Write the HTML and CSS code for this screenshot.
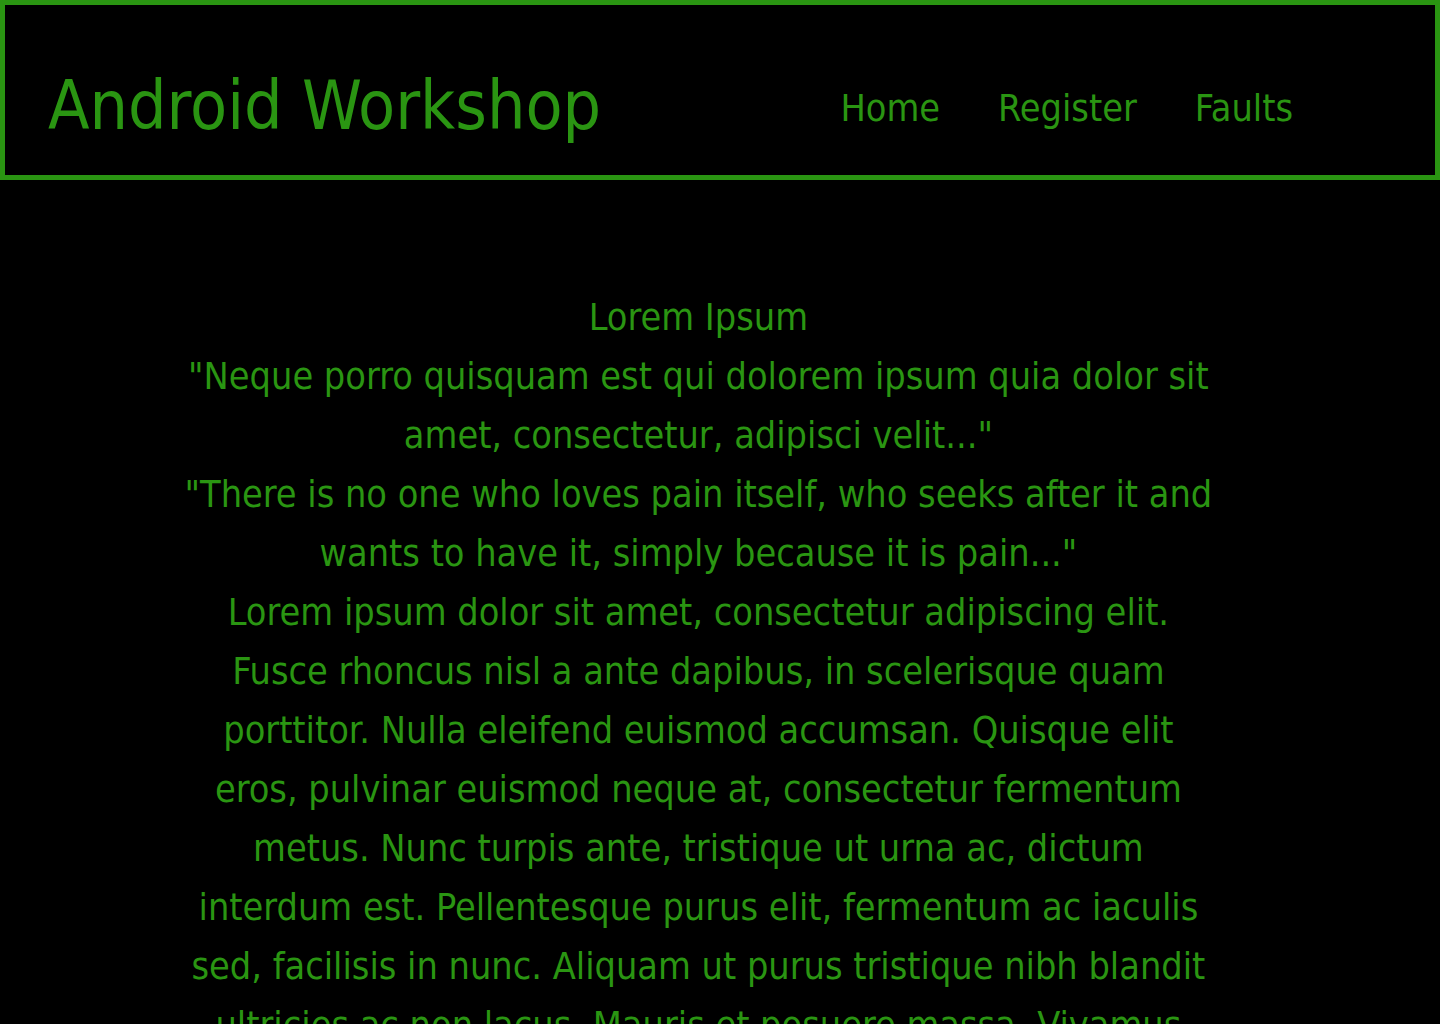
FILE: index.html
```html
<!DOCTYPE html>
<html lang="en">
<head>
<meta charset="utf-8">
<title>Android Workshop</title>
<link rel="stylesheet" href="styles.css">
</head>
<body>
<header class="site-header">
  <h1 class="brand">Android Workshop</h1>
  <nav class="nav">
    <a class="nav-link" href="#">Home</a>
    <a class="nav-link" href="#">Register</a>
    <a class="nav-link" href="#">Faults</a>
  </nav>
</header>
<main class="content">
  <h2 class="title">Lorem Ipsum</h2>
  <p class="para">"Neque porro quisquam est qui dolorem ipsum quia dolor sit amet, consectetur, adipisci velit..."</p>
  <p class="para">"There is no one who loves pain itself, who seeks after it and wants to have it, simply because it is pain..."</p>
  <p class="para">Lorem ipsum dolor sit amet, consectetur adipiscing elit. Fusce rhoncus nisl a ante dapibus, in scelerisque quam porttitor. Nulla eleifend euismod accumsan. Quisque elit eros, pulvinar euismod neque at, consectetur fermentum metus. Nunc turpis ante, tristique ut urna ac, dictum interdum est. Pellentesque purus elit, fermentum ac iaculis sed, facilisis in nunc. Aliquam ut purus tristique nibh blandit ultricies ac non lacus. Mauris et posuere massa. Vivamus vitae lacus nec nisi fringilla dignissim. Sed vel augue eu metus luctus pretium ut vitae odio.</p>
</main>
</body>
</html>
```
FILE: styles.css
```css
html, body {
  margin: 0;
  padding: 0;
  background: #000;
}
body {
  color: #2a9512;
  font-family: "DejaVu Sans Condensed", "DejaVu Sans", sans-serif;
}
.site-header {
  box-sizing: border-box;
  height: 180px;
  border: 5px solid #2a9512;
  display: flex;
  align-items: center;
  padding: 32px 142px 0 43px;
}
.brand {
  margin: 0;
  font-size: 67.5px;
  font-weight: normal;
  line-height: 1;
}
.nav {
  margin-left: auto;
  padding-top: 5px;
  display: flex;
  gap: 58px;
}
.nav-link {
  color: #2a9512;
  text-decoration: none;
  font-size: 37.5px;
  line-height: 1;
}
.content {
  width: 72%;
  margin: 108px 0 0 12.5%;
  text-align: center;
  font-size: 37.5px;
  line-height: 59px;
}
.title {
  margin: 0;
  font-size: inherit;
  font-weight: normal;
}
.para {
  margin: 0;
}
```
